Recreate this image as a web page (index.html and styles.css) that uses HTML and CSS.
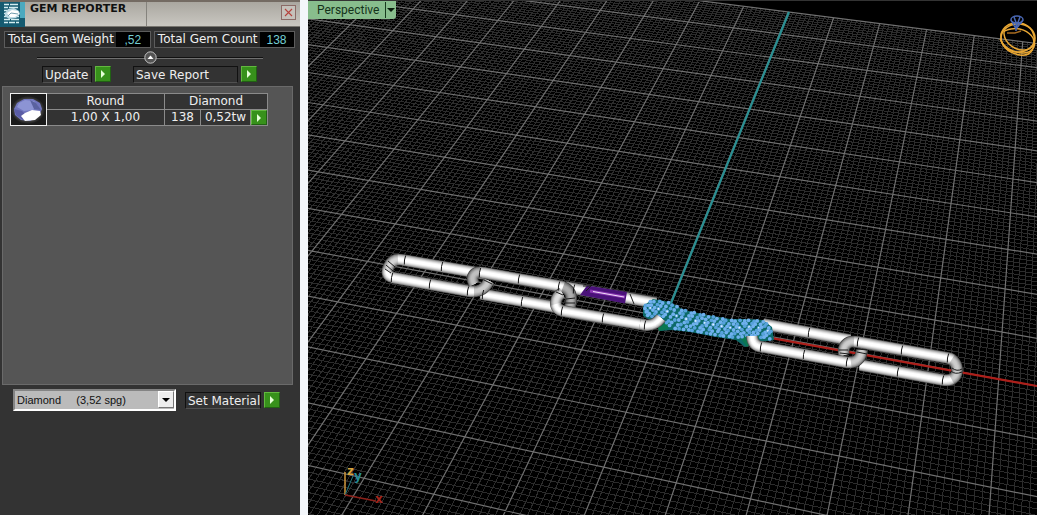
FILE: index.html
```html
<!DOCTYPE html>
<html lang="en">
<head>
<meta charset="utf-8">
<title>Gem Reporter</title>
<link rel="stylesheet" href="styles.css">
</head>
<body>
<main class="app">
  <aside class="panel">
    <header class="titlebar">
      <svg class="logo" viewBox="0 0 25 25" aria-hidden="true">
        <rect width="25" height="25" fill="#155a70"/>
        <rect x="20" width="5" height="16" fill="#4ba9bf"/>
        <path d="M4 2.500h5m1 0h8M4 5.500h4m1 0h9M4 8.500h3M4 11.500h3M4 14.500h4m1 0h10M4 17.500h6m1 0h8M4 20.500h4m1 0h6m1 0h3" stroke="#d3edf1" stroke-width="1.500"/>
        <path d="M5 11l3-4 6-1 5 3 1 3-4 4-7 1-4-3z" fill="#bcd9e3"/>
        <path d="M7 11l5-3 6 1 1 3-4 3-5 0z" fill="#fff"/>
        <path d="M8 14l3-3 7 1" stroke="#719dae" fill="none"/>
      </svg>
      <h1 class="title">GEM REPORTER</h1>
      <button class="close" type="button" aria-label="Close"><svg viewBox="0 0 13 13" aria-hidden="true"><path d="M3 3l7 7m0-7l-7 7" stroke="#b5413c" stroke-width="1.100"/></svg></button>
    </header>

    <dl class="totals">
      <div class="total"><dt>Total Gem Weight</dt><dd>,52</dd></div>
      <div class="total"><dt>Total Gem Count</dt><dd>138</dd></div>
    </dl>

    <div class="fold">
      <button class="fold-button" type="button" aria-label="Collapse"><svg viewBox="0 0 13 13" aria-hidden="true"><circle cx="6.500" cy="6.500" r="5.700" fill="#545454" stroke="#c4c4c4"/><path d="M3.500 8l3-3.500 3 3.500z" fill="#fff"/></svg></button>
    </div>

    <div class="actions">
      <button class="action update" type="button"><span class="action-text">Update</span><span class="go"></span></button>
      <button class="action save" type="button"><span class="action-text">Save Report</span><span class="go"></span></button>
    </div>

    <section class="list">
      <table class="gems">
        <colgroup><col class="thumb-col"><col class="size-col"><col class="count-col"><col class="weight-col"><col class="run-col"></colgroup>
        <tbody>
          <tr>
            <td class="thumb" rowspan="2">
              <svg viewBox="0 0 35 31" aria-hidden="true">
                <defs><radialGradient id="halo"><stop offset=".6" stop-color="#666"/><stop offset="1" stop-color="#1b1b1b"/></radialGradient></defs>
                <rect width="35" height="31" fill="#1b1b1b"/>
                <ellipse cx="17" cy="16" rx="17" ry="14" fill="url(#halo)"/>
                <path d="M3 15l3-6 7-4 9 0 7 4 2 6-3 7-9 5-9-1-6-5z" fill="#7075bd"/>
                <path d="M8 9l6-3 9 1 4 5-5 4-9 1-7-4z" fill="#8c94d4"/>
                <path d="M3 15l8 2 4 4-3 5-7-5z" fill="#5a5ca5"/>
                <path d="M19 6l6 3 5 7-7-1z" fill="#5a62a0"/>
                <path d="M10 22l4-3 7-3 8 1 1 4-6 5-10 1z" fill="#fff"/>
              </svg>
            </td>
            <td>Round</td>
            <td colspan="3">Diamond</td>
          </tr>
          <tr>
            <td>1,00 X 1,00</td>
            <td>138</td>
            <td>0,52tw</td>
            <td><button class="go" type="button" aria-label="Select gems"></button></td>
          </tr>
        </tbody>
      </table>
    </section>

    <div class="material-row">
      <div class="picker">
        <select class="select" aria-label="Material"><option>Diamond &nbsp;&nbsp;&nbsp; (3,52 spg)</option></select>
        <span class="drop" aria-hidden="true"></span>
      </div>
      <button class="action set" type="button"><span class="action-text">Set Material</span><span class="go"></span></button>
    </div>
  </aside>

  <section class="viewport">
    <svg class="scene" viewBox="308 1 729 514" preserveAspectRatio="xMinYMin slice" role="img" aria-label="Perspective view of chain">
      <path id="minor" class="minor"/>
      <path id="major" class="major"/>
      <path d="M789 12L665 318" stroke="#2a8f92" stroke-width="2.200"/>
      <path d="M665 319L1037 386" stroke="#ad1f1a" stroke-width="2.200"/>
      <g id="chain" fill="none" stroke-linejoin="round"></g>
      <g id="gems"></g>
      <g id="front" fill="none" stroke-linejoin="round"></g>
      <g fill="none">
        <path d="M345 472V495" stroke="#cf973b" stroke-width="1.500"/>
        <path d="M345 495L353 476" stroke="#247a80"/>
        <path d="M345 495L376 501" stroke="#8c2019" stroke-width="1.500"/>
      </g>
      <text class="axis z" x="347" y="475">z</text>
      <text class="axis y" x="354" y="480">y</text>
      <text class="axis x" x="375" y="503">x</text>
      <g fill="none" stroke="#e7a634" stroke-width="1.500">
        <ellipse cx="1018" cy="38" rx="17" ry="14"/>
        <path d="M1001 34C1000 46 1008 53 1020 55S1036 46 1034 36C1032 28 1026 23 1017 23S1003 28 1001 34Z"/>
        <path d="M1004 34C1005 44 1016 51 1025 50S1035 43 1033 38C1029 31 1019 27 1011 29S1004 31 1004 34"/>
        <path d="M1000 39C1004 48 1014 53 1023 53S1034 48 1035 43"/>
        <path d="M1007 33L1015 33L1021 31" stroke="#a66b20"/>
      </g>
      <g fill="none" stroke="#4a68b4" stroke-width="1.500">
        <ellipse cx="1017" cy="19.500" rx="6" ry="3.500"/>
        <path d="M1011 20L1016 29L1023 20M1014 17L1017 25L1020 17M1012 23L1022 23M1016 24V31"/>
      </g>
    </svg>
    <button class="view-tab" type="button"><span class="view-name">Perspective</span><span class="view-arrow"></span></button>
  </section>
</main>
<script src="scene.js"></script>
</body>
</html>
```
FILE: styles.css
```css
* { box-sizing: border-box; }
body { margin: 0; background: #333; font: 12px/16px "DejaVu Sans", Verdana, sans-serif; color: #eee; }
button { font: inherit; color: inherit; padding: 0; border: 0; background: none; }
svg { display: block; }
.app { display: grid; grid-template-columns: 308px minmax(0, 1fr); height: 100vh; overflow: hidden; }
.panel { background: #333; border-right: 8px solid #f3f6fa; }

.titlebar { display: flex; height: 27px; border-top: 2px solid #746b63; border-bottom: 1px solid #77756f; background: linear-gradient(#aaa7a0, #c9c7c1); }
.logo { width: 25px; height: 25px; flex: none; }
.title { width: 122px; margin: 0; padding-left: 5px; border-right: 1px solid #85837d; font-size: 11px; line-height: 13px; color: #111; white-space: nowrap; }
.close { width: 15px; height: 15px; margin: 3px 4px 0 auto; border: 1px solid #8b6b67; background: #c5c1bb; }

.totals { display: flex; gap: 3px; margin: 0; padding: 4px 4px 0; }
.total { display: flex; height: 17px; border: 1px solid #5c5c5c; background: #282828; }
.total dt { padding: 0 2px 0 3px; line-height: 15px; white-space: nowrap; }
.total dd { width: 34px; margin: 0; background: #000; color: #74ced3; font: 12px/16px "Liberation Sans", Arial, sans-serif; text-align: center; }

.fold { display: flex; justify-content: center; margin: 3px 37px 0; background: linear-gradient(#111, #111) 0 6px / 100% 1px no-repeat, linear-gradient(#707070, #707070) 0 7px / 100% 1px no-repeat; }
.fold-button { width: 13px; height: 13px; }

.actions { display: flex; gap: 22px; padding: 2px 42px 0; }
.action { display: flex; gap: 3px; height: 17px; text-align: left; }
.action-text { flex: 1; height: 17px; padding-left: 2px; border: 1px solid #505050; border-top-color: #111; border-left-color: #111; border-right-color: #111; line-height: 16px; white-space: nowrap; }
.update { width: 69px; }
.save { width: 124px; }
.set { width: 95px; }
.go { display: flex; flex: none; align-items: center; justify-content: center; width: 16px; height: 16px; border: 1px solid #216114; border-top-color: #62b83f; border-left-color: #62b83f; background: #37911b; }
.go::before { content: ""; border: 4px solid transparent; border-right-width: 0; border-left-color: #e6ffd8; }

.list { height: 299px; margin: 3px 7px 0 2px; padding: 6px 7px; border: 1px solid #6a6a6a; background: #555; }
.gems { width: 257px; border-collapse: collapse; table-layout: fixed; background: #333; text-align: center; }
.gems td { height: 16px; padding: 0; border: 1px solid #8b8b8b; line-height: 15px; }
.gems .thumb { border-color: #eee; }
.thumb svg { width: 35px; height: 31px; }
.thumb-col { width: 36px; }
.size-col { width: 118px; }
.count-col { width: 36px; }
.weight-col { width: 50px; }
.run-col { width: 17px; }
.gems .go { height: 15px; }

.material-row { display: flex; align-items: center; gap: 9px; padding: 4px 12px 0 13px; }
.picker { display: grid; width: 163px; }
.picker > * { grid-area: 1 / 1; }
.select { appearance: none; height: 22px; padding: 0 20px 0 2px; border: 2px solid #fff; border-top-color: #848484; border-left-color: #848484; border-radius: 0; background: #bbb; color: #111; font: 11px "Liberation Sans", Arial, sans-serif; }
.drop { display: flex; justify-self: end; align-items: center; justify-content: center; width: 16px; height: 17px; margin: 2px; border: 1px solid #777; border-top-color: #fff; border-left-color: #fff; background: #eee; pointer-events: none; }
.drop::before { content: ""; border: 4px solid transparent; border-bottom-width: 0; border-top-color: #000; }

.viewport { position: relative; overflow: hidden; background: #000; border-top: 1px solid #333; }
.scene { width: 100%; height: 100%; }
.minor { fill: none; stroke: #2c2c2c; stroke-width: 1; shape-rendering: crispEdges; }
.major { fill: none; stroke: #707070; stroke-width: 1.2; }
.axis { font: bold 12px "DejaVu Sans", sans-serif; }
.z { fill: #d6a43f; }
.y { fill: #268d96; }
.x { fill: #a5251c; }
.view-tab { position: absolute; top: 0; left: 0; display: flex; height: 18px; border-radius: 0 0 3px 0; background: #88bd8d; color: #14321a; font: 12px/18px Roboto, "Open Sans", sans-serif; }
.view-name { padding: 0 6px 0 9px; }
.view-arrow { display: flex; align-items: center; width: 11px; margin: 1px 0; border-left: 1px solid #173a1d; }
.view-arrow::before { content: ""; margin-left: 1px; border: 4px solid transparent; border-bottom-width: 0; border-top-color: #0b1f0e; }
```
FILE: scene.js
```js
// Construction plane to screen: four known grid corners fix the perspective.
const corners = [
  [-8, 7, 392.7, 30.7], [5, 10, 1022.7, 41.7],
  [5, -2, 991, 487.3], [-4, -3, 332.7, 408.3]
];

function solve(rows) {
  const n = rows.length;
  for (let i = 0; i < n; i++) {
    let p = i;
    for (let r = i; r < n; r++) if (Math.abs(rows[r][i]) > Math.abs(rows[p][i])) p = r;
    [rows[i], rows[p]] = [rows[p], rows[i]];
    for (let r = 0; r < n; r++) {
      if (r === i) continue;
      const f = rows[r][i] / rows[i][i];
      for (let c = i; c <= n; c++) rows[r][c] -= f * rows[i][c];
    }
  }
  return rows.map((row, i) => row[n] / row[i]);
}

const h = solve(corners.flatMap(([u, v, x, y]) => [
  [u, v, 1, 0, 0, 0, -u * x, -v * x, x],
  [0, 0, 0, u, v, 1, -u * y, -v * y, y]
]));

function project(u, v) {
  const w = h[6] * u + h[7] * v + 1;
  return ((h[0] * u + h[1] * v + h[2]) / w).toFixed(1) + " " + ((h[3] * u + h[4] * v + h[5]) / w).toFixed(1);
}

let minor = "", major = "";
for (let i = -100; i <= 100; i++) {
  const t = i / 10;
  const d = `M${project(t, -6)}L${project(t, 10)}` + (t >= -6 ? `M${project(-10, t)}L${project(10, t)}` : "");
  if (i % 10) minor += d; else major += d;
}
document.getElementById("minor").setAttribute("d", minor);
document.getElementById("major").setAttribute("d", major);

const NS = "http://www.w3.org/2000/svg";
function add(parent, tag, attrs) {
  const el = document.createElementNS(NS, tag);
  for (const k in attrs) el.setAttribute(k, attrs[k]);
  parent.appendChild(el);
}
const chain = document.getElementById("chain");
const gems = document.getElementById("gems");
const front = document.getElementById("front");

// A shaded tube is a stack of ever narrower and lighter strokes.
const tones = [["#4a4a4a", 11.5], ["#8a8a8a", 10.5], ["#b6b6b6", 9], ["#d9d9d9", 7], ["#f2f2f2", 5], ["#fff", 3]];
function tube(group, d) {
  for (const [stroke, width] of tones) add(group, "path", { d, stroke, "stroke-width": width });
}
function shade(group, d, opacity = 0.16) {
  add(group, "path", { d, stroke: "#000", "stroke-width": 11.5, "stroke-opacity": opacity });
}
function seams(group, points) {
  const d = points.map(([x, y]) => `M${x + 0.7} ${y - 4.5}Q${x - 1} ${y} ${x - 0.7} ${y + 4.5}`).join("");
  add(group, "path", { d, stroke: "#151515", "stroke-width": 1 });
}
function ticks(group, d) {
  add(group, "path", { d, stroke: "#1d1d1d", "stroke-width": 1 });
}

// Far sides of links 1 to 3
tube(chain, "M485 274L403 260C395 258 391 262 389 266C386 272 387 276 393 277.500");
shade(chain, "M398 259.500C391 260 389 265 387 270");
ticks(chain, "M388 261L395 267M386 265L393 271M385 269L391 273");
tube(chain, "M481 294L560 308");
tube(chain, "M565 287L656 303");

// Enamel insert
add(chain, "path", { d: "M587 285.500L627 292L625 303.500L580 295Z", fill: "#4a1279" });
add(chain, "path", { d: "M590 291L625 297", stroke: "#8c39b5", "stroke-width": 3 });
add(chain, "path", { d: "M593 291.500L624 297", stroke: "#f0dff7", "stroke-width": 1 });
ticks(chain, "M583 286L591 286L586 291M630 294L634 304");

// Near sides of links 1 to 3
tube(chain, "M392 277.500L468 291C479 293 485 289 489 281");
shade(chain, "M474 292C482 292 486 287 489 281", 0.2);
tube(chain, "M474 284C470 276 475 271 482 272.500L559 286C571 288 573 296 570 307");
shade(chain, "M474 284C470 276 474 272 480 272", 0.25);
shade(chain, "M563 287C571 290 573 297 570 307", 0.32);
tube(chain, "M562 293C555 297 552 309 563 311L645 325");
shade(chain, "M562 293C557 296 555 300 556 304", 0.12);
ticks(chain, "M484 280L492 284M556 292L563 295M566 299L575 298M565 303L575 303");
seams(chain, [[405, 260], [442, 266.5], [392, 277.5], [430, 284], [468, 291], [480, 272.5], [519, 279], [559, 286], [483, 294.5], [522, 301.5], [562, 311], [603, 318], [574, 289]]);

// Links 5 and 6
tube(chain, "M763 324L850 340");
tube(chain, "M844 355C842 346 847 340 858 342L948 358C960 360 962 383 943 380L860 365");
shade(chain, "M844 355C842 346 847 341 854 341.500", 0.2);
shade(chain, "M952 359C960 364 959 376 952 380", 0.2);
seams(chain, [[809, 332.5], [858, 342], [902, 350], [948, 358], [943, 380], [898, 372]]);
ticks(chain, "M839 350L848 350M840 353L849 354M951 371Q955 375 962 372M952 368Q957 372 962 369");

// Pave-set link: green metal carrying rows of stones.
add(gems, "path", { d: "M643 306L653 299L670 302L684 310L707 315L730 319L747 319L763 320L772 327L774 340L760 342L745 347L736 340L716 337L690 332L672 330L660 331L664 322L650 320L643 316Z", fill: "#0d6a68" });
add(gems, "path", { d: "M655 321L669 323L668 329L659 331ZM739 336L761 336L747 347Z", fill: "#0a7750" });

const topEdge = [[645, 305], [653, 301], [670, 303.5], [684, 311], [707, 316], [730, 321], [745, 320.5], [763, 321.5], [772, 328]];
const bottomEdge = [[645, 314], [653, 317], [665, 321], [672, 328], [690, 330], [717, 335], [737, 337.5], [750, 335], [772, 339]];
function edge(points, x) {
  let i = 1;
  while (i < points.length - 1 && points[i][0] < x) i++;
  const [x0, y0] = points[i - 1], [x1, y1] = points[i];
  return y0 + (y1 - y0) * (x - x0) / (x1 - x0);
}
for (let row = 0; row < 6; row++)
  for (let i = 0; i < 29; i++) {
    const x = 645.5 + i * 4.5 + (row % 2) * 2.25 + Math.sin(i * 2.7 + row * 1.9) * 0.8;
    if (x > 771.5) continue;
    const y = edge(topEdge, x) + (edge(bottomEdge, x) - edge(topEdge, x)) * row / 5 + Math.cos(i * 3.1 + row * 2.3) * 0.6;
    add(gems, "circle", { cx: x.toFixed(1), cy: y.toFixed(1), r: 1.9, fill: (i + row) % 3 ? "#6fb0ee" : "#57a2dc" });
    if (row === 2 && i % 2) add(gems, "circle", { cx: x.toFixed(1), cy: y.toFixed(1), r: 0.9, fill: "#e2f4ff" });
  }

// Ends of the plain links that pass in front of the stones.
tube(front, "M640 324.100L645 325C653 326 657 323 661 318");
tube(front, "M752 336C752 344 757 346.500 762 347L845 362C856 364 861 359 862 350");
shade(front, "M851 363C858 362 861 358 862 350", 0.2);
seams(front, [[645, 325], [761, 347], [804, 354.5], [847, 362]]);
ticks(front, "M857 349L867 350M857 352L867 354");
```
